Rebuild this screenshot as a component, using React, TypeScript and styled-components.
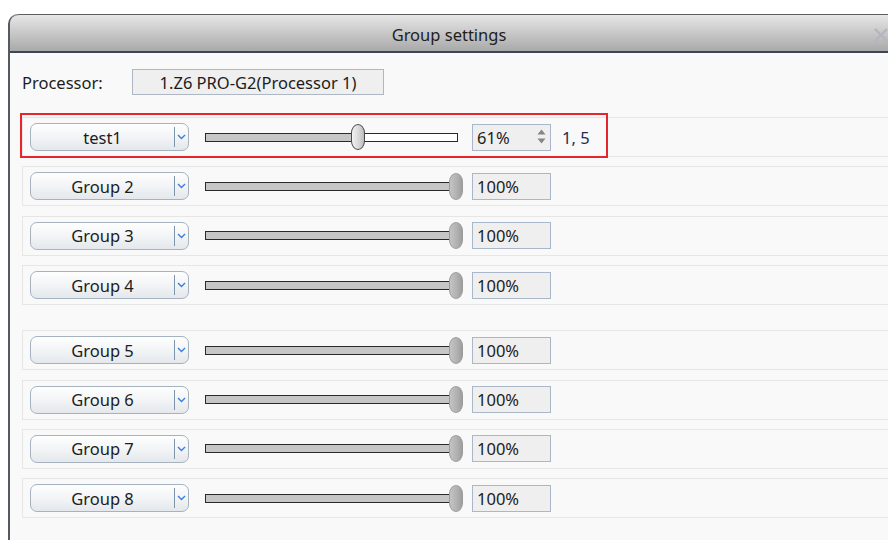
import React from "react";
import styled, { createGlobalStyle } from "styled-components";

const GlobalStyle = createGlobalStyle`
  html, body {
    margin: 0;
    padding: 0;
    background: #ffffff;
    overflow: hidden;
  }
  body {
    font-family: "Noto Sans", "Open Sans", "Liberation Sans", sans-serif;
    color: #1c1c1c;
  }
`;

const Window = styled.div`
  margin: 14px 0 0 8px;
  width: 892px;
  height: 540px;
  border-left: 2px solid #555a60;
  border-top-left-radius: 10px;
  background: #f9f9f9;
  box-sizing: border-box;
`;

const TitleBar = styled.div`
  position: relative;
  height: 39px;
  box-sizing: border-box;
  border-top: 1px solid #5e5e5e;
  border-bottom: 2px solid #3d4656;
  border-top-left-radius: 9px;
  background: linear-gradient(#e6e6e6, #a9a9a9);
  display: flex;
  align-items: center;
  justify-content: center;
  padding: 2px 12px 0 0;
`;

const Title = styled.div`
  font-size: 16.5px;
  color: #1e1e1e;
`;

const CloseButton = styled.div`
  position: absolute;
  left: 863px;
  top: 12px;
  width: 16px;
  height: 16px;
  display: flex;
`;

const Content = styled.div`
  padding: 16px 0 0 12px;
`;

const ProcessorRow = styled.div`
  display: flex;
  align-items: center;
  height: 26px;
`;

const Label = styled.div`
  width: 110px;
  font-size: 16.5px;
`;

const ProcessorBox = styled.div`
  width: 252px;
  height: 26px;
  box-sizing: border-box;
  border: 1px solid #aeb8c4;
  background: #efefef;
  font-size: 16.5px;
  display: flex;
  align-items: center;
  justify-content: center;
`;

const Sections = styled.div`
  margin-top: 22px;
  display: flex;
  flex-direction: column;
  gap: 25px;
`;

const Section = styled.div`
  display: flex;
  flex-direction: column;
  gap: 9.4px;
`;

const Row = styled.div`
  position: relative;
  height: 40px;
  box-sizing: border-box;
  border: 1px solid #e6e6e6;
  border-right: none;
  padding-left: 7px;
  display: flex;
  align-items: center;
`;

const Highlight = styled.div`
  position: absolute;
  left: -3px;
  top: -5px;
  width: 588px;
  height: 45px;
  box-sizing: border-box;
  border: 2px solid #e5262d;
  pointer-events: none;
`;

const Dropdown = styled.div`
  width: 159px;
  height: 28px;
  box-sizing: border-box;
  border: 1px solid #a7b2bf;
  border-radius: 7px;
  background: linear-gradient(#fefefe, #f1f3f5 55%, #e4e8ec);
  display: flex;
  align-items: center;
  margin-right: 16px;
`;

const DropdownText = styled.div`
  flex: 1;
  text-align: center;
  font-size: 16.5px;
  color: #1c1c1c;
`;

const DropdownArrow = styled.div`
  width: 13px;
  height: 20px;
  border-left: 1px solid #7f93aa;
  display: flex;
  align-items: center;
  justify-content: center;
`;

const Slider = styled.div`
  position: relative;
  width: 258px;
  height: 27px;
  margin-right: 9px;
  display: flex;
  align-items: center;
`;

const Track = styled.div`
  width: 253px;
  height: 9px;
  box-sizing: border-box;
  border: 1.5px solid #2a2a2a;
  background: #ffffff;
  display: flex;
`;

const TrackFill = styled.div`
  height: 100%;
  background: #c6c6c6;
`;

const Thumb = styled.div<{ $active?: boolean }>`
  position: absolute;
  top: 0;
  width: 14px;
  height: ${(p) => (p.$active ? "26px" : "27px")};
  box-sizing: border-box;
  border-radius: 7px / 9px;
  border: 1px solid ${(p) => (p.$active ? "#4a4a4a" : "#9a9a9a")};
  background: ${(p) =>
    p.$active
      ? "linear-gradient(90deg, #f2f2f2, #d6d6d6 60%, #bdbdbd)"
      : "linear-gradient(90deg, #c4c4c4, #b0b0b0 60%, #9e9e9e)"};
`;

const ValueBox = styled.div`
  position: relative;
  width: 79px;
  height: 27px;
  box-sizing: border-box;
  border: 1px solid #a9b7c8;
  background: #efefef;
  font-size: 16.5px;
  color: #1c1c1c;
  padding-left: 4px;
  display: flex;
  align-items: center;
`;

const Spinner = styled.div`
  position: absolute;
  right: 4px;
  top: 4px;
  display: flex;
  flex-direction: column;
  gap: 3px;
`;

const Extra = styled.div`
  margin-left: 11px;
  font-size: 16.5px;
  color: #1e2e4c;
`;

type Group = {
  name: string;
  value: number;
  spinner?: boolean;
  extra?: string;
  selected?: boolean;
};

const sections: Group[][] = [
  [
    { name: "test1", value: 61, spinner: true, extra: "1, 5", selected: true },
    { name: "Group 2", value: 100 },
    { name: "Group 3", value: 100 },
    { name: "Group 4", value: 100 },
  ],
  [
    { name: "Group 5", value: 100 },
    { name: "Group 6", value: 100 },
    { name: "Group 7", value: 100 },
    { name: "Group 8", value: 100 },
  ],
];

const Chevron = () => (
  <svg width="9" height="6" viewBox="0 0 9 6">
    <path d="M1 1 L4.5 4.5 L8 1" fill="none" stroke="#3a7fd6" strokeWidth="1.4" />
  </svg>
);

const SpinArrows = () => (
  <Spinner>
    <svg width="9" height="6" viewBox="0 0 9 6">
      <path d="M4.5 0.5 L8.5 5.5 L0.5 5.5 Z" fill="#858585" />
    </svg>
    <svg width="9" height="6" viewBox="0 0 9 6">
      <path d="M0.5 0.5 L8.5 0.5 L4.5 5.5 Z" fill="#858585" />
    </svg>
  </Spinner>
);

const GroupRow = ({ g }: { g: Group }) => {
  const frac = g.value / 100;
  return (
    <Row>
      {g.selected && <Highlight />}
      <Dropdown>
        <DropdownText>{g.name}</DropdownText>
        <DropdownArrow>
          <Chevron />
        </DropdownArrow>
      </Dropdown>
      <Slider>
        <Track>
          <TrackFill style={{ width: `${frac * 100}%` }} />
        </Track>
        <Thumb $active={g.selected} style={{ left: `${Math.round(frac * 251 - 7)}px` }} />
      </Slider>
      <ValueBox>
        {g.value}%
        {g.spinner && <SpinArrows />}
      </ValueBox>
      {g.extra && <Extra>{g.extra}</Extra>}
    </Row>
  );
};

export default function App() {
  return (
    <>
      <GlobalStyle />
      <Window>
        <TitleBar>
          <Title>Group settings</Title>
          <CloseButton>
            <svg width="16" height="16" viewBox="0 0 16 16">
              <path d="M2 2 L14 14 M14 2 L2 14" stroke="#b4b6bf" strokeWidth="2.4" />
            </svg>
          </CloseButton>
        </TitleBar>
        <Content>
          <ProcessorRow>
            <Label>Processor:</Label>
            <ProcessorBox>1.Z6 PRO-G2(Processor 1)</ProcessorBox>
          </ProcessorRow>
          <Sections>
            {sections.map((sec, i) => (
              <Section key={i}>
                {sec.map((g) => (
                  <GroupRow key={g.name} g={g} />
                ))}
              </Section>
            ))}
          </Sections>
        </Content>
      </Window>
    </>
  );
}
